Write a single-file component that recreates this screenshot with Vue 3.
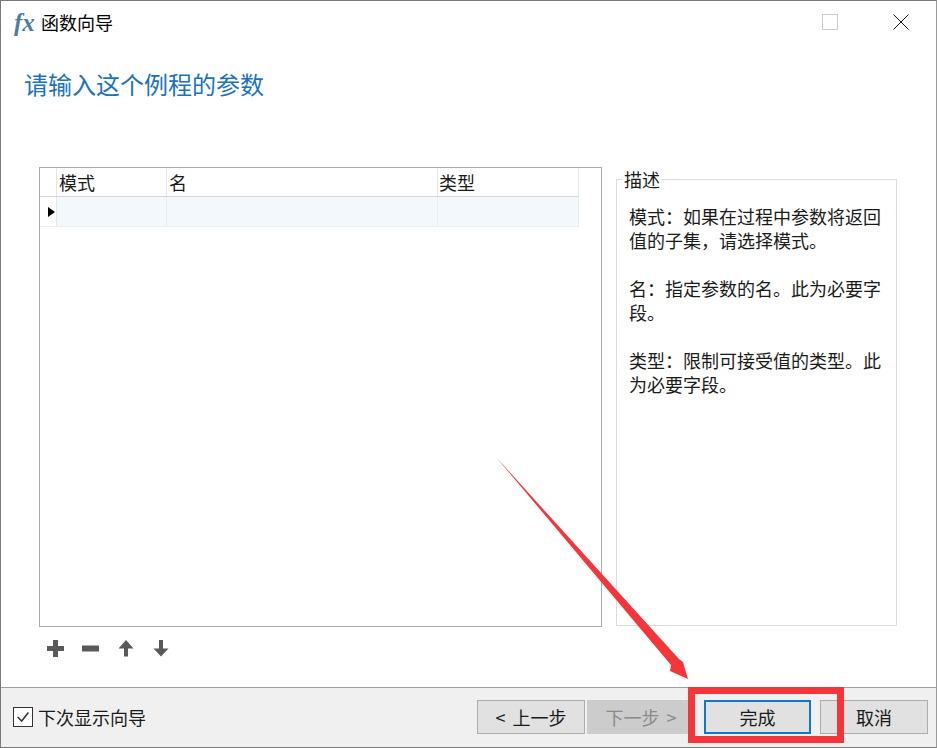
<script setup>
const tools = [
  { name: "add", d: "M6 0h5v6h6v5h-6v6H6v-6H0V6h6z" },
  { name: "remove", d: "M0 5.500h17v6H0z" },
  { name: "up", d: "M9 0l7.500 8.500H11v8H7v-8H1.500z" },
  { name: "down", d: "M7 0h4v8.500h5.500L9 16.500 1.500 8.500H7z" },
];
const columns = [
  { title: "模式", cls: "col-mode" },
  { title: "名", cls: "col-name" },
  { title: "类型", cls: "col-type" },
];
</script>

<template>
  <div class="window">
    <div class="titlebar">
      <span class="fx">fx</span>
      <span class="title">函数向导</span>
      <div class="controls">
        <span class="max-box"></span>
        <svg class="close" viewBox="0 0 16 16"><path d="M0.500 0.500l15 15M15.500 0.500l-15 15" /></svg>
      </div>
    </div>
    <h1>请输入这个例程的参数</h1>

    <div class="content">
      <div class="left">
        <div class="grid">
          <div class="row head">
            <div class="gutter"></div>
            <div v-for="c in columns" :key="c.title" class="cell" :class="c.cls">{{ c.title }}</div>
          </div>
          <div class="row current">
            <div class="gutter"><span class="pointer"></span></div>
            <div v-for="c in columns" :key="c.title" class="cell" :class="c.cls"></div>
          </div>
        </div>
        <div class="tools">
          <svg v-for="t in tools" :key="t.name" class="tool" viewBox="0 0 17 17"><path :d="t.d" /></svg>
        </div>
      </div>
      <fieldset class="desc">
        <legend>描述</legend>
        <p>模式：如果在过程中参数将返回值的子集，请选择模式。</p>
        <p>名：指定参数的名。此为必要字段。</p>
        <p>类型：限制可接受值的类型。此为必要字段。</p>
      </fieldset>
    </div>

    <div class="footer">
      <label class="check">
        <span class="box">
          <svg viewBox="0 0 20 20"><path d="M4 10l4.500 4.500L16 5" /></svg>
        </span>
        下次显示向导
      </label>
      <div class="buttons">
        <button class="btn">&lt; 上一步</button>
        <button class="btn disabled">下一步 &gt;</button>
        <button class="btn primary">完成</button>
        <button class="btn cancel">取消</button>
      </div>
    </div>

    <svg class="annotation" viewBox="0 0 937 748">
      <path d="M496 457L671 665L670 671L688 679L683 662L679 659z" />
    </svg>
    <div class="highlight"></div>
  </div>
</template>

<style>
html, body {
  margin: 0;
  background: #fff;
}
</style>

<style scoped>
.window {
  position: relative;
  box-sizing: border-box;
  width: 937px;
  height: 748px;
  display: flex;
  flex-direction: column;
  background: #fff;
  border: 1px solid #7a7a7a;
  border-right-color: #9a9a9a;
  font-family: "Noto Sans CJK SC", "Liberation Sans", sans-serif;
  font-size: 18px;
  color: #1a1a1a;
  overflow: hidden;
}
.titlebar {
  height: 42px;
  display: flex;
  align-items: center;
  padding-left: 13px;
}
.fx {
  width: 27px;
  font-family: "Liberation Serif", serif;
  font-style: italic;
  font-weight: 700;
  font-size: 25px;
  color: #4a7f9f;
  line-height: 1;
}
.title {
  font-size: 18px;
  color: #000;
}
.controls {
  margin-left: auto;
  display: flex;
  align-items: center;
  padding-right: 27px;
}
.max-box {
  width: 14px;
  height: 14px;
  border: 1px solid #cccccc;
  margin-right: 55px;
}
.close {
  width: 16px;
  height: 16px;
}
.close path {
  stroke: #111;
  stroke-width: 1;
  fill: none;
}
h1 {
  margin: 21px 0 0 23px;
  font-size: 24px;
  line-height: 40px;
  font-weight: 400;
  color: #1b72bf;
}
.content {
  flex: 1;
  display: flex;
  padding: 63px 39px 0 38px;
  min-height: 0;
}
.left {
  width: 563px;
  flex: none;
  display: flex;
  flex-direction: column;
}
.grid {
  box-sizing: border-box;
  height: 460px;
  border: 1px solid #ababab;
  background: #fff;
}
.row {
  display: flex;
  width: 539px;
}
.head {
  height: 28px;
  border-bottom: 1px solid #d5d5d5;
}
.current {
  height: 29px;
  border-bottom: 1px solid #eceff1;
}
.gutter {
  box-sizing: border-box;
  width: 17px;
  flex: none;
  border-right: 1px solid #e6e6e6;
  display: flex;
  align-items: center;
  padding-left: 8px;
}
.pointer {
  width: 0;
  height: 0;
  border-left: 7px solid #000;
  border-top: 5.500px solid transparent;
  border-bottom: 5.500px solid transparent;
}
.cell {
  box-sizing: border-box;
  border-right: 1px solid #e6e6e6;
  padding-left: 2px;
  line-height: 28px;
  white-space: nowrap;
}
.current .cell {
  background: #f3f8fc;
  border-right-color: #e8edf0;
}
.col-mode { width: 110px; }
.col-name { width: 271px; }
.col-type { width: 141px; padding-left: 1px; }
.tools {
  display: flex;
  align-items: center;
  margin-top: 13px;
  padding-left: 8px;
  gap: 18px;
}
.tool {
  width: 17px;
  height: 17px;
}
.tool path {
  fill: #595959;
}
.desc {
  box-sizing: border-box;
  margin: 0 0 0 14px;
  padding: 13px 8px 0 12px;
  width: 281px;
  height: 459px;
  border: 1px solid #dcdcdc;
  min-width: 0;
}
legend {
  padding: 0 2px;
  margin-left: -7px;
  font-size: 18px;
  line-height: 24px;
}
.desc p {
  margin: 0 0 24px;
  line-height: 24px;
  font-size: 18px;
}
.footer {
  box-sizing: border-box;
  height: 60px;
  flex: none;
  background: #f0f0f0;
  border-top: 1px solid #a0a0a0;
  display: flex;
  align-items: center;
  padding: 0 8px 1px 12px;
  justify-content: space-between;
}
.check {
  display: flex;
  align-items: center;
  gap: 5px;
  font-size: 18px;
}
.box {
  box-sizing: border-box;
  width: 20px;
  height: 20px;
  border: 1px solid #333;
  background: #fff;
  display: block;
}
.box svg {
  display: block;
  width: 18px;
  height: 18px;
}
.box path {
  fill: none;
  stroke: #333;
  stroke-width: 1.700;
}
.buttons {
  display: flex;
}
.btn {
  box-sizing: border-box;
  width: 108px;
  height: 34px;
  padding: 0;
  border: 1px solid #adadad;
  background: #e1e1e1;
  font: inherit;
  word-spacing: 3px;
  color: #1a1a1a;
}
.btn.disabled {
  margin-left: 2px;
  background: #cccccc;
  border-color: #cccccc;
  color: #8a8a8a;
}
.btn.primary {
  width: 107px;
  margin-left: 9px;
  border: 2px solid #0f78c8;
}
.btn.cancel {
  margin-left: 9px;
}
.annotation {
  position: absolute;
  left: -1px;
  top: -1px;
  width: 937px;
  height: 748px;
  pointer-events: none;
}
.annotation path {
  fill: #f4363a;
}
.highlight {
  position: absolute;
  left: 687px;
  top: 686px;
  width: 156px;
  height: 56px;
  box-sizing: border-box;
  border: 7px solid #f4363a;
  pointer-events: none;
}
</style>
